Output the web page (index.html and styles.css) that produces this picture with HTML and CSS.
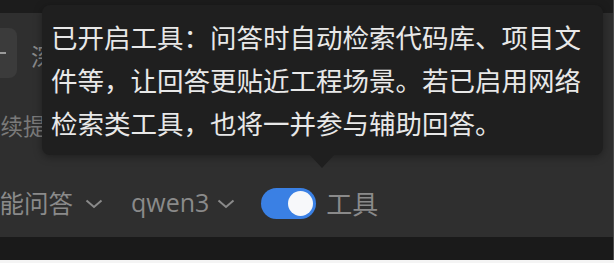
FILE: index.html
```html
<!DOCTYPE html>
<html lang="zh-CN">
<head>
<meta charset="utf-8">
<link rel="stylesheet" href="styles.css">
</head>
<body>
<div class="page">
  <div class="topbar"></div>
  <div class="panel">
    <div class="composer">
      <div class="row1">
        <div class="plus-btn">
          <svg width="28" height="28" viewBox="0 0 28 28"><path d="M14 1v26M1 14h26" stroke="#9a9a9a" stroke-width="2" fill="none"/></svg>
        </div>
        <span class="ph">深度思考</span>
      </div>
      <div class="row2">继续提问</div>
    </div>
    <div class="toolbar">
      <span class="tb-item first">智能问答</span>
      <svg class="chev" width="18" height="10" viewBox="0 0 18 10"><polyline points="1.5,1.5 9,8 16.5,1.5" fill="none" stroke="#8a8a8a" stroke-width="2"/></svg>
      <span class="tb-item model">qwen3</span>
      <svg class="chev chev2" width="18" height="10" viewBox="0 0 18 10"><polyline points="1.5,1.5 9,8 16.5,1.5" fill="none" stroke="#8a8a8a" stroke-width="2"/></svg>
      <span class="toggle"><span class="knob"></span></span>
      <span class="tb-item tools">工具</span>
    </div>
    <div class="tooltip">已开启工具：问答时自动检索代码库、项目文件等，让回答更贴近工程场景。若已启用网络检索类工具，也将一并参与辅助回答。</div>
  </div>
  <div class="bottombar"></div>
</div>
</body>
</html>
```

FILE: styles.css
```css
html, body {
  margin: 0;
  padding: 0;
  background: #f4f4f4;
}
.page {
  width: 614px;
  height: 260px;
  display: flex;
  flex-direction: column;
  overflow: hidden;
  font-family: "Open Sans", "Noto Sans CJK SC", sans-serif;
  border-right: 1px solid #4a4a4a;
  box-sizing: border-box;
}
.topbar {
  height: 13px;
  background: #1c1c1c;
}
.panel {
  position: relative;
  height: 224px;
  background: #2f2f2f;
  display: flex;
  flex-direction: column;
}
.composer {
  padding-top: 15px;
  display: flex;
  flex-direction: column;
}
.row1 {
  display: flex;
  align-items: center;
  gap: 14px;
}
.plus-btn {
  width: 48px;
  height: 50px;
  margin-left: -31px;
  border-radius: 8px;
  background: #3b3b3b;
  display: flex;
  align-items: center;
  justify-content: center;
}
.ph {
  font-family: "Noto Sans CJK SC", sans-serif;
  font-size: 24px;
  color: #8a8a8a;
  line-height: 30px;
  margin-top: 6px;
}
.row2 {
  margin-top: 33px;
  margin-left: -22px;
  font-family: "Noto Sans CJK SC", sans-serif;
  font-size: 22.5px;
  line-height: 28px;
  color: #7a7a7a;
}
.toolbar {
  margin-top: auto;
  height: 40px;
  margin-bottom: 14px;
  display: flex;
  align-items: center;
  color: #8a8a8a;
}
.tb-item {
  font-size: 25px;
  line-height: 40px;
  white-space: nowrap;
}
.tb-item.first {
  font-family: "Noto Sans CJK SC", sans-serif;
  margin-left: -25px;
  font-size: 24.5px;
}
.chev {
  margin-left: 12px;
  margin-top: 2px;
}
.model {
  margin-left: 28px;
  font-family: "Open Sans", sans-serif;
  margin-top: -3px;
}
.chev2 {
  margin-left: 8px;
}
.toggle {
  margin-left: 26px;
  width: 55px;
  height: 31px;
  border-radius: 16px;
  background: #3a80e4;
  display: flex;
  align-items: center;
  justify-content: flex-end;
  padding-right: 3px;
  box-sizing: border-box;
}
.knob {
  width: 25px;
  height: 25px;
  border-radius: 50%;
  background: #f7f8fa;
}
.tools {
  margin-left: 10px;
  font-family: "Noto Sans CJK SC", sans-serif;
  font-size: 26px;
}
.tooltip {
  position: absolute;
  left: 42px;
  top: -8px;
  width: 561px;
  height: 150px;
  box-sizing: border-box;
  padding: 10px 8px 11px 9px;
  background: #1f1f1f;
  border-radius: 8px;
  box-shadow: 0 2px 8px rgba(0, 0, 0, 0.35);
  font-family: "Noto Sans CJK SC", sans-serif;
  font-size: 26.5px;
  line-height: 43px;
  color: #e8e8e8;
}
.tooltip::after {
  content: "";
  position: absolute;
  left: 268px;
  bottom: -13px;
  border-left: 12.5px solid transparent;
  border-right: 12.5px solid transparent;
  border-top: 13px solid #1f1f1f;
}
.bottombar {
  height: 23px;
  background: #1a1a1a;
}
```
